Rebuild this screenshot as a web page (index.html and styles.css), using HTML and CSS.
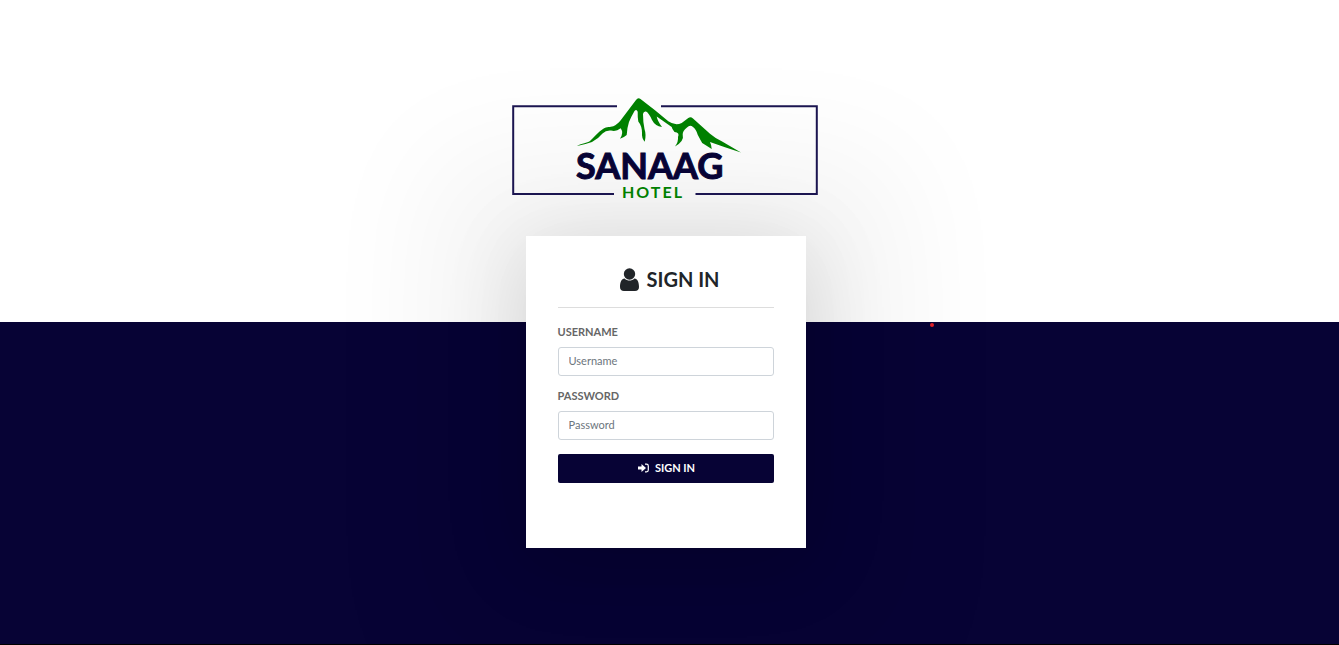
FILE: index.html
```html
<!DOCTYPE html>
<html lang="en">
<head>
<meta charset="utf-8">
<meta name="viewport" content="width=device-width, initial-scale=1">
<title>Sanaag Hotel - Sign in</title>
<link rel="stylesheet" href="styles.css">
</head>
<body>
<main class="login-page">
  <svg class="logo" viewBox="512 97 308 103" role="img" aria-label="Sanaag Hotel">
    <path class="logo-frame" d="M617 106.300H513.200V194H614M661 106.300H816.800V194H695.500"/>
    <path class="logo-mountain" d="M577 146C582 143 587 143 590 141C594 137 598 132 603.300 128.700C607 126.500 610 127.500 613.300 126.300C616 125 618.500 123 620.700 120.300L636 100Q638 97 640.500 99L655 110.300L668.300 121.300Q675 126 681.700 123L688.300 118Q690.700 116.500 693 118.500L710 133.700Q715 138 721.700 141.300L741 152.500L725 147.300L710 142Q711.500 145 711.700 149L705 144.700Q701.500 143.500 700.500 140L697.700 134.700Q696 129 693 127Q690 124.500 687 127.500Q682.500 131 682.700 134.500Q684.500 141 675 146.500Q678.500 142 678 137Q680 132.500 674.500 132Q672 129 671.700 127L656.700 116.500Q657.500 121 662 127Q655 126 652 120Q649 113 646 111.500Q643.500 111 643 114Q643 122 644.500 129Q646.500 135 644.700 141.700Q641.500 138 642 133Q642 126 638.300 121.500Q637.500 117 637.700 111.700Q636.500 108.500 634.500 111Q631 117 629 122Q627 128 626.700 135Q624 137.500 620 138.700Q624 133 620.700 128.300Q616 132 611 130.500Q606 130 602.500 133.500Q598 139 592 142Q585 144.500 577 146Z"/>
    <text class="logo-name" x="576" y="179">SANAAG</text>
    <text class="logo-sub" x="622" y="198">HOTEL</text>
  </svg>

  <section class="login-box">
    <form class="login-form">
      <h1 class="login-head">
        <svg class="icon-user" viewBox="0 0 19 23" aria-hidden="true"><circle cx="9.500" cy="6" r="5.700"/><path d="M4.500 10.500C1.500 11 0 14 0 19C0 21.500 1.500 23 4 23H15C17.500 23 19 21.500 19 19C19 14 17.500 11 14.500 10.500C11.500 13.300 7.500 13.300 4.500 10.500Z"/></svg>
        <span>SIGN IN</span>
      </h1>
      <label class="field-label" for="username">USERNAME</label>
      <input class="field" id="username" type="text" placeholder="Username">
      <label class="field-label" for="password">PASSWORD</label>
      <input class="field" id="password" type="password" placeholder="Password">
      <button class="submit" type="submit">
        <svg class="icon-enter" viewBox="0 0 11 10" aria-hidden="true"><path d="M0 3.500H3.500V1L8 5L3.500 9V6.500H0Z"/><path class="icon-door" d="M7 1.200H8.500Q10.300 1.200 10.300 3V7Q10.300 8.800 8.500 8.800H7"/></svg>
        <span>SIGN IN</span>
      </button>
    </form>
  </section>
  <span class="marker"></span>
</main>
</body>
</html>
```
FILE: styles.css
```css
* {
  box-sizing: border-box;
}

body {
  margin: 0;
  font-family: Lato, "Liberation Sans", sans-serif;
  color: #212529;
}

.login-page {
  position: relative;
  display: flex;
  flex-direction: column;
  align-items: center;
  justify-content: center;
  gap: 36px;
  min-height: 100vh;
  padding-right: 8px;
  overflow: hidden;
  border-bottom: 1px solid #000;
  background: linear-gradient(#fff 50%, #070335 50%);
}

.logo {
  position: relative;
  z-index: 1;
  width: 308px;
  max-width: 100%;
  overflow: visible;
}

.logo-frame {
  fill: none;
  stroke: #1b1550;
  stroke-width: 2;
}

.logo-mountain {
  fill: #008000;
}

.logo-name,
.logo-sub {
  font-family: Lato, "Liberation Sans", sans-serif;
  font-weight: 700;
}

.logo-name {
  fill: #070335;
  stroke: #070335;
  stroke-width: 1px;
  font-size: 36px;
}

.logo-sub {
  fill: #008000;
  font-size: 16px;
  letter-spacing: 2px;
}

.login-box {
  width: 280px;
  max-width: 100%;
  min-height: 312px;
  padding: 32px;
  background: #fff;
  box-shadow: 0 12px 120px 90px rgba(0, 0, 0, 0.05), 0 12px 80px 0 rgba(0, 0, 0, 0.14);
}

.login-form {
  display: flex;
  flex-direction: column;
}

.login-head {
  display: flex;
  align-items: center;
  justify-content: center;
  gap: 7px;
  margin: 0 0 15px;
  padding: 0 0 16px 9px;
  border-bottom: 1px solid #ddd;
  font-size: 20px;
  line-height: 23px;
}

.icon-user {
  width: 19px;
  height: 23px;
  fill: currentColor;
}

.field-label {
  margin-bottom: 7px;
  color: #666;
  font-size: 11px;
  font-weight: 700;
  line-height: 17px;
}

.field {
  width: 100%;
  height: 29px;
  margin-bottom: 11px;
  padding: 0 10px 1px;
  border: 1px solid #ced4da;
  border-radius: 3px;
  background: #fff;
  color: #495057;
  font: 400 11px/17px Lato, "Liberation Sans", sans-serif;
}

.field::placeholder {
  color: #6c757d;
  opacity: 1;
}

.submit {
  display: flex;
  align-items: center;
  justify-content: center;
  gap: 6px;
  height: 29px;
  margin-top: 3px;
  padding: 0 0 1px 2px;
  border: 0;
  border-radius: 2px;
  background: #070335;
  color: #fff;
  font: 700 11px/17px Lato, "Liberation Sans", sans-serif;
}

.icon-enter {
  width: 11px;
  height: 10px;
  fill: currentColor;
}

.icon-door {
  fill: none;
  stroke: currentColor;
  stroke-width: 1.2px;
}

.marker {
  position: absolute;
  top: 50%;
  left: 930px;
  width: 4px;
  height: 4px;
  margin-top: 1px;
  border-radius: 50%;
  background: #e02028;
}
```
